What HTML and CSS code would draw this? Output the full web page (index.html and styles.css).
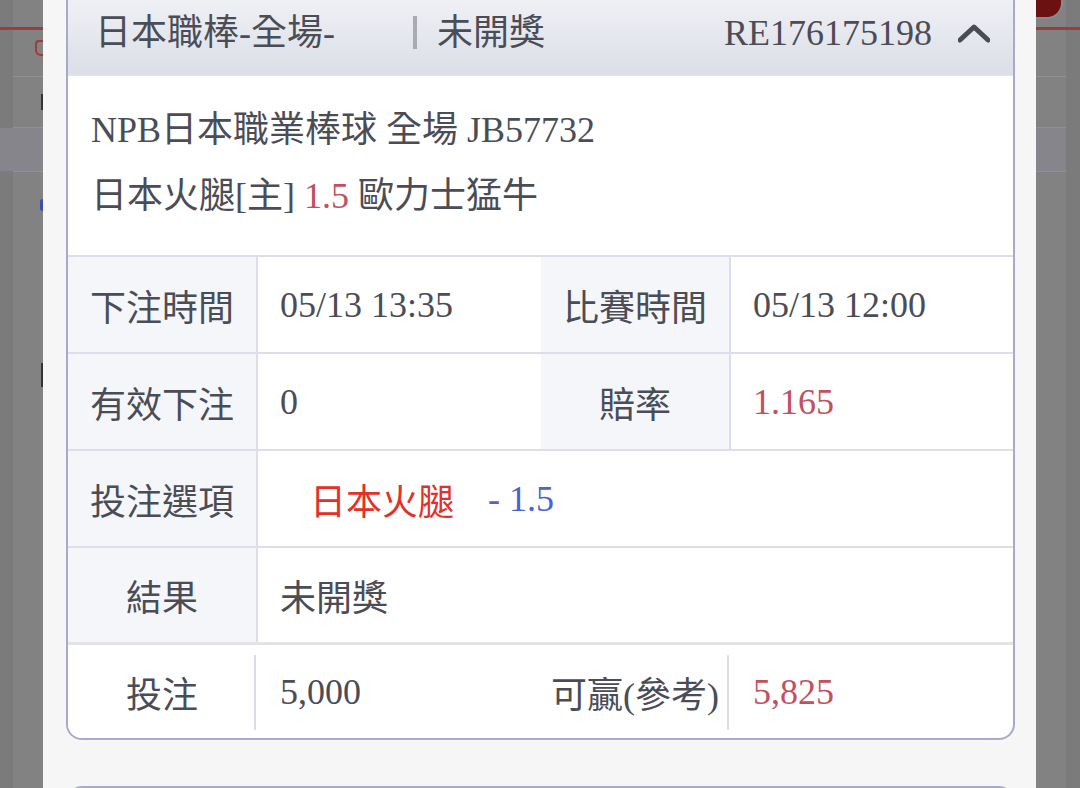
FILE: index.html
```html
<!DOCTYPE html>
<html lang="zh-Hant">
<head>
<meta charset="utf-8">
<title>注單詳情</title>
<link rel="stylesheet" href="styles.css">
</head>
<body>
<div class="screen">
  <div class="side side-left">
    <div class="band b1"></div>
    <div class="redline"></div>
    <div class="band b2"><span class="frag-red"></span></div>
    <div class="gline"></div>
    <div class="band b3"><span class="frag-dark"></span></div>
    <div class="gline"></div>
    <div class="band b4"></div>
    <div class="gline"></div>
    <div class="band b5"><span class="frag-blue"></span></div>
    <div class="band b6"><span class="frag-bar"></span></div>
  </div>

  <main class="panel">
    <section class="card">
      <header class="card-head">
        <span class="title">日本職棒-全場-</span>
        <span class="sep"></span>
        <span class="status">未開獎</span>
        <span class="ticket">RE176175198</span>
        <svg class="chev" width="32" height="20" viewBox="0 0 32 20"><polyline points="2,17 16,4 30,17" fill="none" stroke="#4a4c55" stroke-width="5" stroke-linecap="round" stroke-linejoin="round"/></svg>
      </header>

      <div class="info">
        <div class="line">NPB日本職業棒球 全場 JB57732</div>
        <div class="line">日本火腿[主] <span class="rose">1.5</span> 歐力士猛牛</div>
      </div>

      <div class="row">
        <div class="label">下注時間</div>
        <div class="value">05/13 13:35</div>
        <div class="label">比賽時間</div>
        <div class="value">05/13 12:00</div>
      </div>
      <div class="row">
        <div class="label">有效下注</div>
        <div class="value">0</div>
        <div class="label">賠率</div>
        <div class="value rose">1.165</div>
      </div>
      <div class="row">
        <div class="label">投注選項</div>
        <div class="value wide"><span class="pick">日本火腿</span><span class="hcp">- 1.5</span></div>
      </div>
      <div class="row">
        <div class="label">結果</div>
        <div class="value wide">未開獎</div>
      </div>
      <div class="row row-last">
        <div class="label">投注</div>
        <div class="value">5,000</div>
        <div class="label">可贏(參考)</div>
        <div class="value rose">5,825</div>
      </div>
    </section>
    <div class="card next"></div>
  </main>

  <div class="side side-right">
    <div class="band r1"><span class="dot"></span></div>
    <div class="redline"></div>
    <div class="band b2"></div>
    <div class="gline"></div>
    <div class="band b3"></div>
    <div class="gline"></div>
    <div class="band b4"></div>
    <div class="gline"></div>
  </div>
</div>
</body>
</html>
```

FILE: styles.css
```css
html, body {
  margin: 0;
  padding: 0;
  height: 100%;
  overflow: hidden;
}

body {
  font-family: "Liberation Serif", "Noto Sans CJK TC", serif;
  color: #4b4d56;
  background: #7f7f7f;
}

.screen {
  display: flex;
  height: 788px;
}

/* dimmed page behind the modal */
.side {
  background: #7f7f7f;
  display: flex;
  flex-direction: column;
}
.side-left {
  width: 43px;
  background: linear-gradient(to right, #7b7b7b 0 13px, #828282 13px);
}
.side-right {
  width: 44px;
  background: linear-gradient(to right, #828282 0 30px, #7b7b7b 30px);
}
.band { display: flex; }
.b1 { height: 27px; }
.r1 { height: 27px; align-items: flex-start; }
.redline { height: 3px; background: #9a3d3d; }
.b2 { height: 46px; justify-content: flex-end; align-items: flex-start; }
.b3 { height: 50px; justify-content: flex-end; align-items: flex-start; }
.b4 { height: 43px; background: #85858b; }
.b5 { height: 190px; justify-content: flex-end; align-items: flex-start; }
.b6 { height: 50px; justify-content: flex-end; align-items: flex-start; }
.side-right .b4 { margin-right: 14px; }
.gline { height: 1px; background: #909096; margin-left: 13px; }
.side-right .gline { margin-left: 0; margin-right: 14px; }

.frag-red {
  width: 6px; height: 12px;
  margin-top: 10px;
  border: 2px solid #a23a3a;
  border-right: none;
  border-radius: 4px 0 0 6px;
}
.frag-dark { width: 2px; height: 16px; margin-top: 17px; background: #333; }
.frag-blue { width: 3px; height: 12px; margin-top: 27px; background: #3a4fb0; border-radius: 3px 0 0 3px; }
.frag-bar { width: 2px; height: 24px; margin-top: 1px; background: #333; }
.dot {
  width: 25px; height: 17px;
  background: #6b1111;
  border: 2px solid #8a8a8a;
  border-top: none; border-left: none;
  border-radius: 0 0 16px 0;
}

/* modal panel */
.panel {
  flex: 1;
  background: #f6f6f7;
  padding: 0 21px 0 23px;
  display: flex;
  flex-direction: column;
  gap: 46px;
  overflow: hidden;
}

.card {
  background: #fff;
  border: 2px solid #a9aacb;
  border-top: none;
  border-radius: 0 0 16px 16px;
  overflow: hidden;
  flex-shrink: 0;
}
.card.next {
  height: 40px;
  border-top: 2px solid #a9aacb;
  border-radius: 16px 16px 0 0;
  background: linear-gradient(#eef0f4, #dcdee8);
}

.card-head {
  box-sizing: border-box;
  height: 76px;
  display: flex;
  align-items: center;
  padding: 0 23px 10px 27px;
  background: linear-gradient(#eef0f4, #dcdee8);
  border-bottom: 1px solid #e3e4ec;
  font-size: 36px;
  line-height: 1;
}
.title { width: 318px; }
.sep {
  width: 4px;
  height: 33px;
  background: #a9aab2;
  margin-right: 20px;
}
.status { flex: 1; }
.chev { margin-left: 26px; display: block; }

.info {
  padding: 21px 23px 26px;
  border-bottom: 2px solid #dddded;
  font-size: 36px;
  line-height: 66px;
}
.line { white-space: nowrap; }

.rose { color: #c2505e; }

.row {
  display: grid;
  grid-template-columns: 190px 283px 190px 1fr;
  height: 95px;
  border-bottom: 2px solid #dddded;
  font-size: 36px;
}
.row:nth-last-child(2) {
  height: 94px;
  border-bottom: 3px solid #e2e2e7;
}
.label {
  background: #f5f6fa;
  border-right: 2px solid #dddded;
  display: flex;
  align-items: center;
  justify-content: center;
  white-space: nowrap;
}
.value {
  display: flex;
  align-items: center;
  padding-left: 22px;
  white-space: nowrap;
}
.value.wide { grid-column: 2 / -1; }

.pick { color: #e2312b; margin-left: 30px; }
.hcp { color: #4b62d4; margin-left: 34px; }

.row-last { border-bottom: none; height: 93px; }
.row-last .label {
  background: #fff linear-gradient(#dcdce6, #dcdce6) no-repeat right 0 top 10px / 2px 75px;
  border-right: 2px solid transparent;
}
```
